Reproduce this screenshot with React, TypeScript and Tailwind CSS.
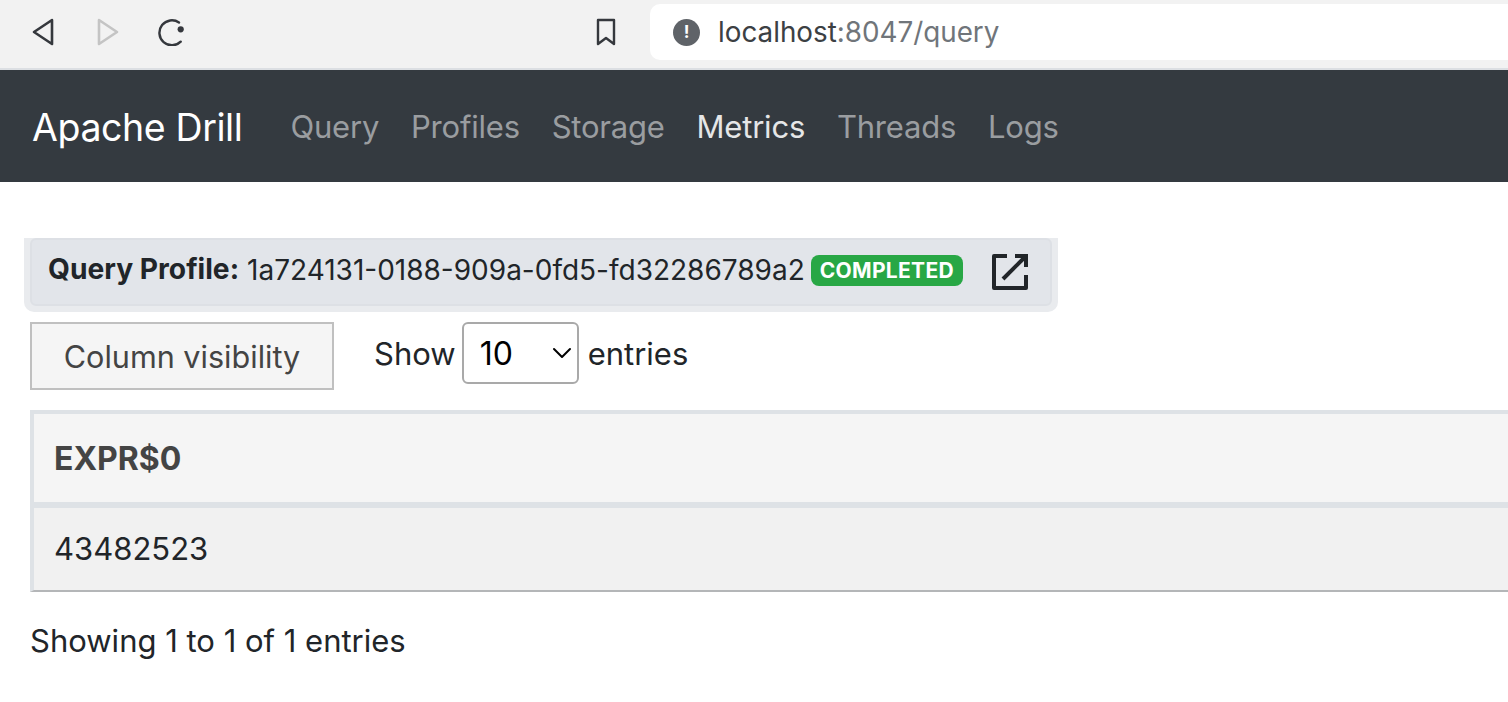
import { ChevronDown } from "lucide-react";

const navLinks = [
  { label: "Query", active: false },
  { label: "Profiles", active: false },
  { label: "Storage", active: false },
  { label: "Metrics", active: true },
  { label: "Threads", active: false },
  { label: "Logs", active: false },
];

function BrowserBar() {
  return (
    <div className="flex h-[70px] items-start border-b-2 border-[#dcdfe3] bg-[#f2f2f2]">
      <div className="flex h-[64px] items-center pl-[32px]">
        <svg width="22" height="28" viewBox="0 0 22 28" fill="none" stroke="#35383d" strokeWidth="2.6" strokeLinejoin="round">
          <path d="M20 2 L2 14 L20 26 Z" />
        </svg>
        <svg className="ml-[43px]" width="22" height="28" viewBox="0 0 22 28" fill="none" stroke="#c4c4c4" strokeWidth="2.6" strokeLinejoin="round">
          <path d="M2 2 L20 14 L2 26 Z" />
        </svg>
        <svg className="ml-[39px]" width="28" height="28" viewBox="0 0 28 28" fill="none" stroke="#35383d" strokeWidth="2.4" strokeLinecap="round">
          <path d="M22.7 23.7 A12.5 12.5 0 1 1 21 4.5" />
          <circle cx="22.7" cy="11.3" r="3.1" fill="#35383d" stroke="none" />
        </svg>
      </div>
      <div className="ml-[410px] flex h-[64px] items-center">
        <svg width="20" height="28" viewBox="0 0 20 28" fill="none" stroke="#35383d" strokeWidth="2.4" strokeLinejoin="round">
          <path d="M2 2 H18 V26 L10 20 L2 26 Z" />
        </svg>
      </div>
      <div className="ml-[34px] mt-[4px] flex h-[56px] flex-1 items-center rounded-l-[10px] bg-white pl-[23px]">
        <span className="flex h-[27px] w-[27px] items-center justify-center rounded-full bg-[#5f6368] text-[17px] font-bold leading-none text-white">!</span>
        <span className="ml-[18px] mt-[2px] text-[27.8px] leading-none text-[#3c4043]">
          localhost<span className="text-[#70757a]">:8047/query</span>
        </span>
      </div>
    </div>
  );
}

function Navbar() {
  return (
    <nav className="flex h-[112px] items-center bg-[#343a40] pl-[32px]">
      <span className="mt-[5px] text-[37.5px] tracking-[-0.4px] text-white">Apache Drill</span>
      <ul className="ml-[48px] mt-[3px] flex gap-[31.8px] text-[31px] tracking-[-0.2px]">
        {navLinks.map((link) => (
          <li key={link.label} className={link.active ? "text-[#e5e6e7]" : "text-[#9a9da0]"}>
            {link.label}
          </li>
        ))}
      </ul>
    </nav>
  );
}

function ProfileAlert() {
  return (
    <div className="ml-[-6px] w-[1034px] rounded-b-[10px] bg-[#e9ebee] px-[6px] pb-[6px]">
      <div className="flex h-[68px] items-center rounded-[6px] border-2 border-[#dde0e5] bg-[#e2e5ea] pl-[16px] text-[#212529]">
        <span className="mb-[5px] text-[28.2px] font-bold">Query Profile:</span>
        <span className="mb-[5px] ml-[8px] text-[28px]">1a724131-0188-909a-0fd5-fd32286789a2</span>
        <span className="mb-[3px] ml-[6px] rounded-[8px] bg-[#28a745] px-[9px] py-[4.5px] text-[21px] font-bold leading-[22px] tracking-[0.3px] text-white">COMPLETED</span>
        <svg className="ml-[28px]" width="38" height="38" viewBox="0 0 38 38" fill="none" stroke="#212529" strokeWidth="4">
          <path d="M16 3 H3 V35 H35 V22" strokeLinejoin="round" />
          <path d="M24 3 H35 V14" />
          <path d="M35 3 L12 26" />
        </svg>
      </div>
    </div>
  );
}

function TableControls() {
  return (
    <div className="mt-[10px] flex items-start">
      <button className="h-[68px] w-[304px] border-2 border-[#c0c0c0] bg-[#f5f5f5] pt-[2px] text-[30.6px] text-[#444]">Column visibility</button>
      <div className="ml-[40px] flex items-center text-[31px] text-[#212529]">
        <span className="mt-[2px]">Show</span>
        <div className="ml-[6px] flex h-[62px] w-[117px] items-center justify-between rounded-[6px] border-2 border-[#a9a9a9] bg-white pl-[16px] text-[32px] text-black">
          <span className="mt-[2px]">10</span>
          <ChevronDown className="-mr-[1px]" size={32} strokeWidth={1.5} />
        </div>
        <span className="ml-[9px] mt-[2px]">entries</span>
      </div>
    </div>
  );
}

function ResultTable() {
  return (
    <div className="mt-[20px] border-b-2 border-l-4 border-t-4 border-b-[#b4b6b8] border-l-[#dee2e6] border-t-[#dee2e6]">
      <div className="flex h-[88px] items-center bg-[#f5f5f5] pl-[20px] pt-[2px] text-[32px] font-bold text-[#444]">EXPR$0</div>
      <div className="flex h-[88px] items-center border-t-[6px] border-[#dee2e6] bg-[#f1f1f1] pl-[20px] text-[31px] text-[#212529]">43482523</div>
    </div>
  );
}

export default function App() {
  return (
    <div className="h-[702px] overflow-hidden bg-white font-['Inter',sans-serif]">
      <BrowserBar />
      <Navbar />
      <main className="pl-[30px] pt-[56px]">
        <ProfileAlert />
        <TableControls />
        <ResultTable />
        <p className="mt-[26px] text-[31px] text-[#212529]">Showing 1 to 1 of 1 entries</p>
      </main>
    </div>
  );
}
